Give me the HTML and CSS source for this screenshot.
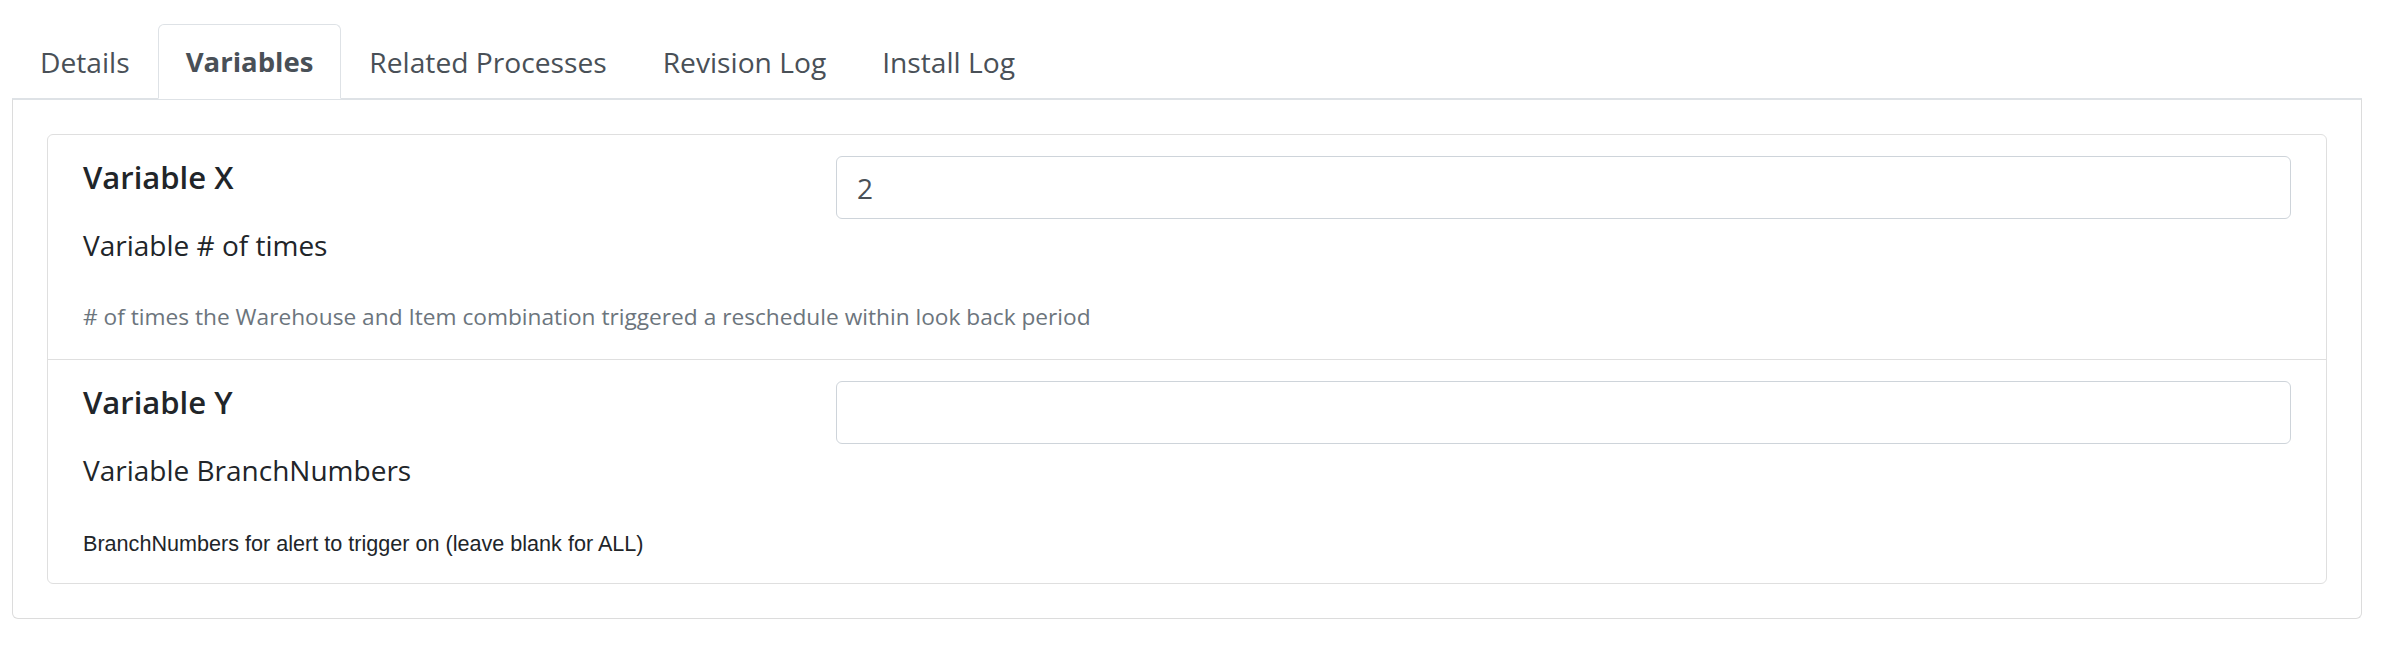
FILE: index.html
```html
<!DOCTYPE html>
<html>
<head>
<meta charset="utf-8">
<title>Variables</title>
<link rel="stylesheet" href="styles.css">
</head>
<body>
<div class="page">
  <ul class="tabs">
    <li class="tab">Details</li>
    <li class="tab active">Variables</li>
    <li class="tab">Related Processes</li>
    <li class="tab">Revision Log</li>
    <li class="tab">Install Log</li>
  </ul>
  <div class="panel">
    <div class="list">
      <div class="item">
        <h5 class="var-title">Variable X</h5>
        <div class="var-label">Variable # of times</div>
        <input class="field" type="text" value="2">
        <div class="var-desc">
          <small># of times the Warehouse and Item combination triggered a reschedule within look back period</small>
        </div>
      </div>
      <div class="item">
        <h5 class="var-title">Variable Y</h5>
        <div class="var-label">Variable BranchNumbers</div>
        <input class="field" type="text" value="">
        <div class="var-note">BranchNumbers for alert to trigger on (leave blank for ALL)</div>
      </div>
    </div>
  </div>
</div>
</body>
</html>
```
FILE: styles.css
```css
* { box-sizing: border-box; }

html, body {
  margin: 0;
  background: #ffffff;
}

body {
  font-family: "Open Sans", "Noto Sans", sans-serif;
  font-size: 28px;
  color: #212529;
}

.page {
  padding: 24px 23px 0 12px;
}

.tabs {
  list-style: none;
  margin: 0;
  padding: 0;
  display: flex;
  border-bottom: 1px solid #dee2e6;
}

.tab {
  margin-bottom: -1px;
  padding: 13px 27px 12px;
  line-height: 48px;
  border: 1px solid transparent;
  border-radius: 6px 6px 0 0;
  color: #495057;
  font-size: 28.2px;
  white-space: nowrap;
}

.tab.active {
  background: #ffffff;
  border-color: #dee2e6 #dee2e6 #ffffff;
  font-weight: 700;
  font-size: 27.5px;
}

.panel {
  border: 1px solid #dcdcdc;
  border-radius: 0 0 6px 6px;
  border-top-color: #dee2e6;
  padding: 34px;
}

.list {
  border: 1px solid #dfdfdf;
  border-radius: 6px;
}

.item {
  display: grid;
  grid-template-columns: 723px 1fr;
  grid-template-areas:
    "title field"
    "label field"
    "desc  desc";
  column-gap: 30px;
  align-items: start;
  padding: 21px 35px;
}

.item + .item {
  border-top: 1px solid #dfdfdf;
}

.var-title {
  grid-area: title;
  margin: 0;
  font-size: 31px;
  font-weight: 600;
  line-height: 43px;
  color: #212529;
}

.var-label {
  grid-area: label;
  margin-top: 25px;
  line-height: 42px;
}

.field {
  grid-area: field;
  display: block;
  width: 100%;
  height: 63px;
  margin: 0;
  padding: 0 20px;
  border: 1px solid #ced4da;
  border-radius: 6px;
  background: #ffffff;
  font-family: "Open Sans", "Noto Sans", sans-serif;
  font-size: 28px;
  color: #495057;
  outline: none;
}

.var-desc {
  grid-area: desc;
  margin-top: 29px;
  line-height: 43px;
  font-size: 22.7px;
  color: #6c757d;
  white-space: nowrap;
}

.var-desc small {
  font-size: 22.7px;
}

.var-note {
  grid-area: desc;
  margin-top: 34px;
  font-family: "Liberation Sans", Arial, sans-serif;
  font-size: 21.6px;
  line-height: 37px;
  color: #212529;
  white-space: nowrap;
}
```
